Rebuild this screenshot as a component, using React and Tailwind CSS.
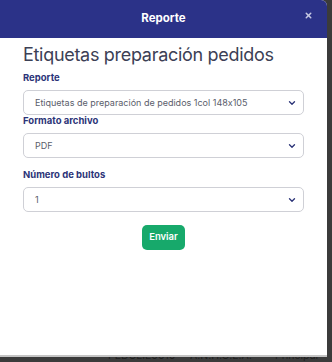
import { ChevronDown, X } from 'lucide-react';

const font = { fontFamily: 'Inter, "Noto Sans", sans-serif', fontFeatureSettings: '"calt" 0' };

function Field({ label, value, className = '' }) {
  return (
    <div className={className}>
      <label className="block text-[9.5px] font-bold leading-[12px] text-[#2c3478]">{label}</label>
      <div className="mt-[6px] flex h-[25px] items-center justify-between rounded-[5px] border border-[#cfd0d6] bg-white pl-[11px] pr-[6px]">
        <span className="text-[9px] text-[#5a5d6b]">{value}</span>
        <ChevronDown className="h-[10px] w-[10px] text-[#2c3478]" strokeWidth={3.2} />
      </div>
    </div>
  );
}

export default function App() {
  return (
    <div className="relative h-[362px] w-[332px] overflow-hidden bg-[#3b3b3b]" style={font}>
      {/* modal */}
      <div className="relative z-10 flex h-[357px] w-[327px] flex-col overflow-hidden rounded-tr-[6px] border-b-2 border-[#c4c4c4] bg-white">
        <div className="relative flex h-[38px] shrink-0 items-center justify-center bg-[#2b3288]">
          <span className="text-[11.5px] font-bold text-white">Reporte</span>
          <X className="absolute right-[14px] top-[11px] h-[9px] w-[9px] text-[#c6c9e3]" strokeWidth={4} />
        </div>

        <div className="px-[23px] pt-[5px]">
          <h1 className="text-[18px] leading-[24px] tracking-[-0.3px] text-[#3c4055]">Etiquetas preparación pedidos</h1>
          <Field className="mt-[5px]" label="Reporte" value="Etiquetas de preparación de pedidos 1col 148x105" />
          <Field label="Formato archivo" value="PDF" />
          <Field className="mt-[11px]" label="Número de bultos" value="1" />
          <div className="mt-[13px] flex justify-center">
            <button className="h-[25px] w-[43px] rounded-[5px] bg-[#17a96b] text-[9.5px] font-semibold text-white">Enviar</button>
          </div>
        </div>
      </div>

      {/* page behind the modal */}
      <div className="-mt-[9px] flex pl-[108px] text-[10.5px] text-[#1e1e1e]">
        <span className="w-[82px]">PEDCLIE0010</span>
        <span className="w-[85px]">A.N.H.C.E.A.</span>
        <span>Principal</span>
      </div>
    </div>
  );
}
